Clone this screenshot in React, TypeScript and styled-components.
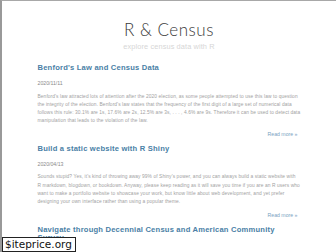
import React from 'react';
import styled, { createGlobalStyle } from 'styled-components';

const GlobalStyle = createGlobalStyle`
  html, body {
    margin: 0;
    padding: 0;
    background: #fff;
  }
  body {
    font-family: "Liberation Sans", Arial, sans-serif;
    overflow: hidden;
  }
`;

const Frame = styled.div`
  position: relative;
  width: 336px;
  height: 252px;
  box-sizing: border-box;
  border-top: 1px solid #a8a8a8;
  border-left: 2px solid #999;
  overflow: hidden;
`;

const Header = styled.header`
  padding-top: 20px;
  text-align: center;
`;

const SiteTitle = styled.h1`
  margin: 0;
  font-family: Lato, "Open Sans", sans-serif;
  font-weight: 300;
  font-size: 17px;
  line-height: 18px;
  letter-spacing: 0.5px;
  color: #3a3a3a;
`;

const Tagline = styled.div`
  margin-top: 3px;
  font-size: 7.4px;
  line-height: 10px;
  color: #d6d6d6;
  letter-spacing: 0.1px;
`;

const Posts = styled.main`
  width: 263px;
  margin: 12px auto 0;
`;

const Post = styled.article`
  & + & {
    margin-top: 7px;
  }
`;

const PostTitle = styled.h2`
  margin: 0 0 5px;
  padding-right: 10px;
  font-size: 7.6px;
  line-height: 8.5px;
  min-height: 10px;
  font-weight: 700;
  letter-spacing: 0.2px;
  color: #4a7fa6;
`;

const PostDate = styled.div`
  font-size: 5.2px;
  line-height: 8px;
  color: #8a8a8a;
  margin-bottom: 5.5px;
`;

const Summary = styled.p`
  margin: 0 0 4.5px;
  font-size: 4.85px;
  line-height: 8.2px;
  letter-spacing: 0.09px;
  color: #a2a2a2;
`;

const ReadMore = styled.div`
  text-align: right;
  padding-right: 3px;
  font-size: 5.2px;
  line-height: 8px;
  color: #7a9fbf;
`;

const Badge = styled.div`
  position: absolute;
  left: 0;
  bottom: 0;
  height: 13px;
  padding: 0 3px 0 2px;
  background: #fff;
  border: 1px solid #222;
  font-family: "DejaVu Sans", sans-serif;
  font-size: 10.5px;
  line-height: 13px;
  color: #111;
`;

const posts = [
  {
    title: "Benford's Law and Census Data",
    date: '2020/11/11',
    text:
      "Benford's law attracted lots of attention after the 2020 election, as some people attempted to use this law to question the integrity of the election. Benford's law states that the frequency of the first digit of a large set of numerical data follows this rule: 30.1% are 1s, 17.6% are 2s, 12.5% are 3s, . . . , 4.6% are 9s. Therefore it can be used to detect data manipulation that leads to the violation of the law.",
  },
  {
    title: 'Build a static website with R Shiny',
    date: '2020/04/13',
    text:
      "Sounds stupid? Yes, it's kind of throwing away 99% of Shiny's power, and you can always build a static website with R markdown, blogdown, or bookdown. Anyway, please keep reading as it will save you time if you are an R users who want to make a portfolio website to showcase your work, but know little about web development, and yet prefer designing your own interface rather than using a popular theme.",
  },
  {
    title: 'Navigate through Decennial Census and American Community Survey',
    date: '2020/03/02',
    text:
      'A quick guide to the decennial census and the American Community Survey, what they measure and how to get the data in R.',
  },
];

export default function App() {
  return (
    <>
      <GlobalStyle />
      <Frame>
        <Header>
          <SiteTitle>R &amp; Census</SiteTitle>
          <Tagline>explore census data with R</Tagline>
        </Header>
        <Posts>
          {posts.map((p) => (
            <Post key={p.title}>
              <PostTitle>{p.title}</PostTitle>
              <PostDate>{p.date}</PostDate>
              <Summary>{p.text}</Summary>
              <ReadMore>Read more »</ReadMore>
            </Post>
          ))}
        </Posts>
        <Badge>$iteprice.org</Badge>
      </Frame>
    </>
  );
}
